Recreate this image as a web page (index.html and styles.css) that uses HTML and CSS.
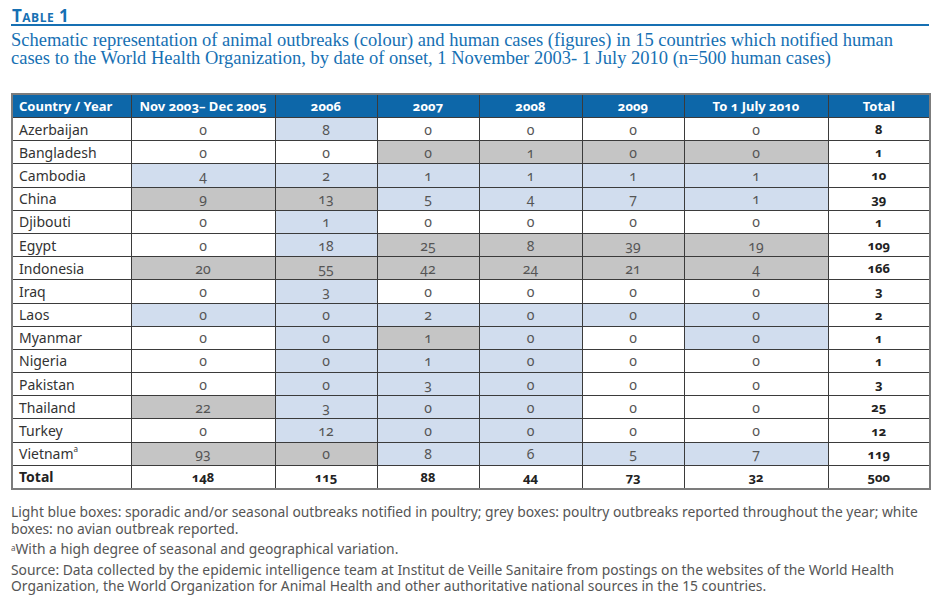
FILE: index.html
```html
<!DOCTYPE html>
<html>
<head>
<meta charset="utf-8">
<link rel="stylesheet" href="styles.css">
</head>
<body>
<div class="page">
  <h1 class="title">Table 1</h1>
  <p class="subtitle">Schematic representation of animal outbreaks (colour) and human cases (figures) in 15 countries which notified human cases to the World Health Organization, by date of onset, 1 November 2003- 1 July 2010 (n=500 human cases)</p>
  <table class="data">
    <colgroup>
      <col class="w-country">
      <col class="w-wide">
      <col class="w-year">
      <col class="w-year">
      <col class="w-year3">
      <col class="w-year">
      <col class="w-wide">
      <col class="w-year">
    </colgroup>
    <thead>
      <tr>
        <th class="c-country">Country / Year</th>
        <th>Nov 2003– Dec 2005</th>
        <th>2006</th>
        <th>2007</th>
        <th>2008</th>
        <th>2009</th>
        <th>To 1 July 2010</th>
        <th>Total</th>
      </tr>
    </thead>
    <tbody>
      <tr><td class="country">Azerbaijan</td><td>0</td><td class="b">8</td><td>0</td><td>0</td><td>0</td><td>0</td><td class="tot">8</td></tr>
      <tr><td class="country">Bangladesh</td><td>0</td><td>0</td><td class="g">0</td><td class="g">1</td><td class="g">0</td><td class="g">0</td><td class="tot">1</td></tr>
      <tr><td class="country">Cambodia</td><td class="b">4</td><td class="b">2</td><td class="b">1</td><td class="b">1</td><td class="b">1</td><td class="b">1</td><td class="tot">10</td></tr>
      <tr><td class="country">China</td><td class="g">9</td><td class="g">13</td><td class="b">5</td><td class="b">4</td><td class="b">7</td><td class="b">1</td><td class="tot">39</td></tr>
      <tr><td class="country">Djibouti</td><td>0</td><td class="b">1</td><td>0</td><td>0</td><td>0</td><td>0</td><td class="tot">1</td></tr>
      <tr><td class="country">Egypt</td><td>0</td><td class="b">18</td><td class="g">25</td><td class="g">8</td><td class="g">39</td><td class="g">19</td><td class="tot">109</td></tr>
      <tr><td class="country">Indonesia</td><td class="g">20</td><td class="g">55</td><td class="g">42</td><td class="g">24</td><td class="g">21</td><td class="g">4</td><td class="tot">166</td></tr>
      <tr><td class="country">Iraq</td><td>0</td><td class="b">3</td><td>0</td><td>0</td><td>0</td><td>0</td><td class="tot">3</td></tr>
      <tr><td class="country">Laos</td><td class="b">0</td><td class="b">0</td><td class="b">2</td><td class="b">0</td><td class="b">0</td><td class="b">0</td><td class="tot">2</td></tr>
      <tr><td class="country">Myanmar</td><td>0</td><td class="b">0</td><td class="g">1</td><td class="b">0</td><td>0</td><td class="b">0</td><td class="tot">1</td></tr>
      <tr><td class="country">Nigeria</td><td>0</td><td class="b">0</td><td class="b">1</td><td class="b">0</td><td>0</td><td>0</td><td class="tot">1</td></tr>
      <tr><td class="country">Pakistan</td><td>0</td><td class="b">0</td><td class="b">3</td><td class="b">0</td><td>0</td><td>0</td><td class="tot">3</td></tr>
      <tr><td class="country">Thailand</td><td class="g">22</td><td class="b">3</td><td class="b">0</td><td class="b">0</td><td>0</td><td>0</td><td class="tot">25</td></tr>
      <tr><td class="country">Turkey</td><td>0</td><td class="b">12</td><td class="b">0</td><td class="b">0</td><td>0</td><td>0</td><td class="tot">12</td></tr>
      <tr><td class="country">Vietnam<sup class="fn">a</sup></td><td class="g">93</td><td class="g">0</td><td class="b">8</td><td class="b">6</td><td class="b">5</td><td class="b">7</td><td class="tot">119</td></tr>
      <tr class="total-row"><td class="country">Total</td><td>148</td><td>115</td><td>88</td><td>44</td><td>73</td><td>32</td><td>500</td></tr>
    </tbody>
  </table>
  <div class="notes">
    <p>Light blue boxes: sporadic and/or seasonal outbreaks notified in poultry; grey boxes: poultry outbreaks reported throughout the year; white boxes: no avian outbreak reported.</p>
    <p><sup class="fn">a</sup>With a high degree of seasonal and geographical variation.</p>
    <p>Source: Data collected by the epidemic intelligence team at Institut de Veille Sanitaire from postings on the websites of the World Health Organization, the World Organization for Animal Health and other authoritative national sources in the 15 countries.</p>
  </div>
</div>
</body>
</html>
```

FILE: styles.css
```css
html, body {
  margin: 0;
  padding: 0;
  background: #ffffff;
}

.page {
  width: 918px;
  padding: 8px 0 0 11px;
  font-family: "Noto Sans", "Open Sans", sans-serif;
}

.title {
  margin: 0;
  padding: 0 0 0 1px;
  font-family: "Open Sans", "Noto Sans", sans-serif;
  font-variant: small-caps;
  font-weight: 700;
  font-size: 17px;
  line-height: 16px;
  color: #1670b3;
  border-bottom: 2px solid #1670b3;
  letter-spacing: 0.5px;
}

.subtitle {
  margin: 5px 0 0 0;
  font-family: "Liberation Serif", serif;
  font-size: 18.5px;
  line-height: 18px;
  color: #1670b3;
}

.data {
  margin-top: 26px;
  width: 918px;
  border-collapse: collapse;
  border: 2px solid #7c7c7c;
  table-layout: fixed;
  font-size: 14px;
  font-variant-numeric: oldstyle-nums;
  font-feature-settings: "onum" 1;
}

.w-country { width: 119px; }
.w-wide { width: 144px; }
.w-year { width: 102px; }
.w-year3 { width: 103px; }

.data th {
  background: #0d67a9;
  color: #ffffff;
  font-weight: 700;
  font-size: 13px;
  height: 22px;
  padding: 0;
  text-align: center;
  border: 1px solid #3b3b3b;
  border-top: 2px solid #7c7c7c;
}

.data th.c-country {
  text-align: left;
  padding-left: 6px;
}

.data td {
  height: 22.2px;
  padding: 0;
  text-align: center;
  color: #555555;
  border: 1px solid #3b3b3b;
  background: #ffffff;
}

.data td.country {
  text-align: left;
  padding-left: 6px;
  color: #333333;
  font-size: 14px;
}

.data td.b {
  background: #d1ddee;
}

.data td.g {
  background: #c5c5c5;
}

.data td.tot {
  font-weight: 700;
  font-size: 13px;
  color: #222222;
}

.data tr.total-row td {
  font-weight: 700;
  font-size: 13px;
  color: #222222;
  border-bottom: 2px solid #7c7c7c;
}

.data tr.total-row td.country {
  font-size: 14px;
}

.fn {
  font-size: 8px;
  vertical-align: top;
  position: relative;
  top: -1px;
}

.notes {
  margin-top: 14px;
  color: #555555;
  font-size: 13.85px;
  line-height: 16.5px;
}

.notes p {
  margin: 0 0 4px 0;
}
```
